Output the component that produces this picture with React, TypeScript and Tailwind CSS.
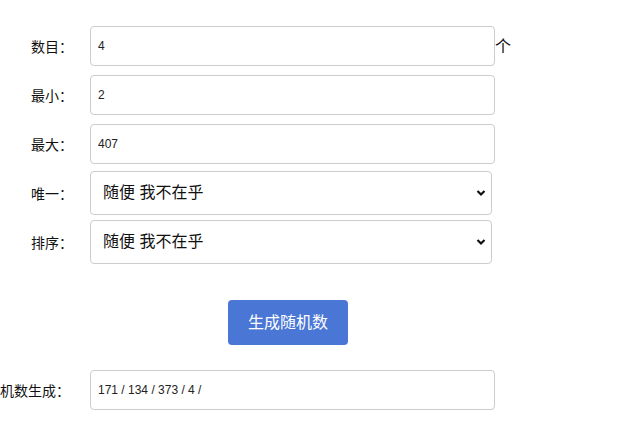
import { useState } from "react"

const font = { fontFamily: '"Liberation Sans", "Noto Sans CJK SC", sans-serif' }

function Label({ text, wide }: { text: string; wide?: boolean }) {
  return (
    <div
      className={
        wide
          ? "w-[70px] mr-[20px] shrink-0 flex justify-end whitespace-nowrap text-[14px] text-[#111] mt-[2px]"
          : "w-[73px] mr-[17px] shrink-0 flex justify-end whitespace-nowrap text-[14px] text-[#111] mt-[2px]"
      }
    >
      {text}
    </div>
  )
}

function Field({ value }: { value: string }) {
  return (
    <input
      readOnly
      value={value}
      className="w-[405px] h-[40px] border border-[#ccc] rounded-[4px] px-[7px] text-[12px] text-[#222] outline-none bg-white"
    />
  )
}

function Choice() {
  return (
    <div className="relative w-[402px] h-[44px]">
      <select className="appearance-none w-full h-full border border-[#ccc] rounded-[4px] pl-[12px] text-[16px] text-[#111] bg-white outline-none">
        <option>随便 我不在乎</option>
      </select>
      <svg
        className="absolute right-[6px] top-[18px] pointer-events-none"
        width="10"
        height="8"
        viewBox="0 0 10 8"
      >
        <path d="M1.5 2 L5 5.5 L8.5 2" fill="none" stroke="#111" strokeWidth="2.2" />
      </svg>
    </div>
  )
}

export default function App() {
  const [result] = useState("171 / 134 / 373 / 4 /")

  return (
    <div className="w-[619px] h-[424px] bg-white overflow-hidden pt-[26px]" style={font}>
      <div className="flex items-center">
        <Label text="数目：" />
        <Field value="4" />
        <span className="self-start mt-[9px] text-[16px] text-[#111]">个</span>
      </div>
      <div className="flex items-center mt-[9px]">
        <Label text="最小：" />
        <Field value="2" />
      </div>
      <div className="flex items-center mt-[9px]">
        <Label text="最大：" />
        <Field value="407" />
      </div>
      <div className="flex items-center mt-[7px]">
        <Label text="唯一：" />
        <Choice />
      </div>
      <div className="flex items-center mt-[5px]">
        <Label text="排序：" />
        <Choice />
      </div>
      <button className="block ml-[228px] mt-[36px] w-[120px] h-[45px] rounded-[4px] bg-[#4a77d6] text-white text-[16px]">
        生成随机数
      </button>
      <div className="flex items-center mt-[25px]">
        <Label text="随机数生成：" wide />
        <Field value={result} />
      </div>
    </div>
  )
}
